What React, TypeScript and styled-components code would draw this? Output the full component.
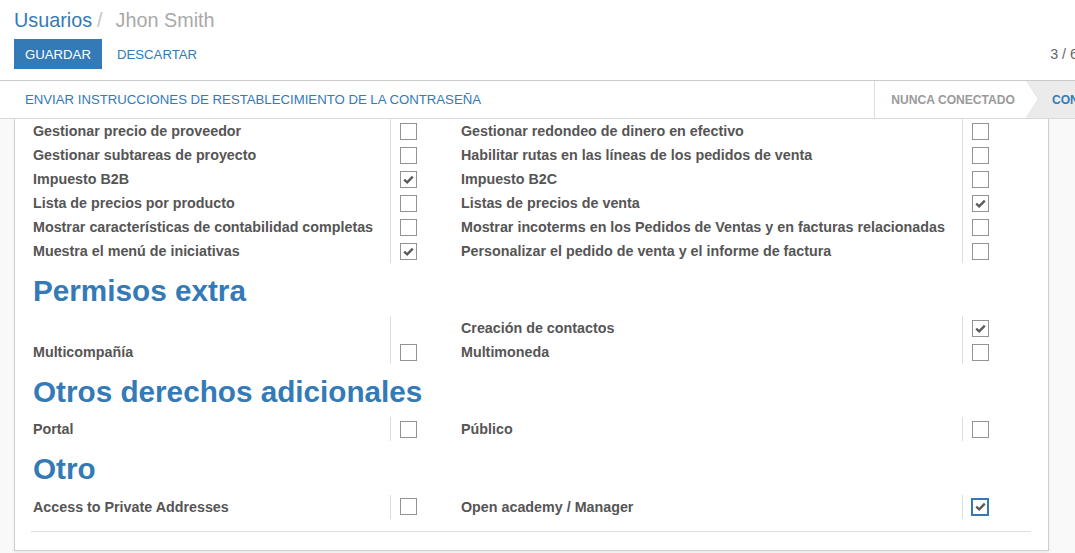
import React from "react";
import styled, { createGlobalStyle } from "styled-components";

const GlobalStyle = createGlobalStyle`
  html, body { margin: 0; padding: 0; overflow: hidden; background: #f9f9f9; }
  body { font-family: "Liberation Sans", Arial, sans-serif; }
  * { box-sizing: border-box; }
`;

const BLUE = "#337ab7";

const Page = styled.div`
  width: 1146px;
  height: 553px;
  display: flex;
  flex-direction: column;
  background: #f9f9f9;
`;

const ControlPanel = styled.div`
  height: 81px;
  background: #fff;
  border-bottom: 1px solid #cacaca;
  padding: 9px 0 0 14px;
  display: flex;
  flex-direction: column;
`;

const Breadcrumb = styled.div`
  font-size: 19.8px;
  line-height: 22px;
  height: 22px;
  white-space: nowrap;
  display: flex;
`;

const Crumb = styled.span`
  color: ${BLUE};
`;

const CrumbSep = styled.span`
  color: #c4c4c4;
  margin: 0 13px 0 5px;
`;

const CrumbActive = styled.span`
  color: #a9a9a9;
`;

const ButtonsRow = styled.div`
  margin-top: 8px;
  display: flex;
  align-items: center;
  height: 30px;
`;

const Button = styled.button<{ $primary?: boolean }>`
  height: 30px;
  padding: 0 11px;
  margin-right: 4px;
  border: none;
  border-radius: 0;
  font-family: "Liberation Sans", Arial, sans-serif;
  font-size: 13.2px;
  cursor: pointer;
  background: ${(p) => (p.$primary ? BLUE : "transparent")};
  color: ${(p) => (p.$primary ? "#fff" : BLUE)};
`;

const Pager = styled.div`
  margin-left: auto;
  display: flex;
  align-items: center;
  color: #666;
  font-size: 14.3px;
`;

const PagerValue = styled.span`
  margin-right: 8px;
`;

const PagerButton = styled.span`
  width: 30px;
  height: 30px;
  border: 1px solid #ccc;
  display: inline-flex;
  align-items: center;
  justify-content: center;
  color: #666;
`;

const StatusBar = styled.div`
  height: 38px;
  background: #fff;
  border-bottom: 1px solid #d9d9d9;
  display: flex;
  align-items: stretch;
  padding-left: 14px;
`;

const StatusAction = styled.div`
  display: flex;
  align-items: center;
  padding: 0 11px;
  color: ${BLUE};
  font-size: 13.2px;
  white-space: nowrap;
`;

const StatusSteps = styled.div`
  margin-left: auto;
  display: flex;
  align-items: stretch;
`;

const Step = styled.div<{ $active?: boolean }>`
  position: relative;
  display: flex;
  align-items: center;
  font-size: 12.1px;
  font-weight: bold;
  white-space: nowrap;
  color: ${(p) => (p.$active ? BLUE : "#9a9a9a")};
  background: ${(p) => (p.$active ? "#ebebeb" : "#fff")};
  padding: ${(p) => (p.$active ? "0 17px 0 26px" : "0 11px 0 16px")};
  border-left: ${(p) => (p.$active ? "none" : "1px solid #dcdcdc")};

  ${(p) =>
    !p.$active &&
    `
    &::before {
      content: "";
      position: absolute;
      top: 0;
      right: -13px;
      border-top: 18.5px solid transparent;
      border-bottom: 18.5px solid transparent;
      border-left: 13px solid #dcdcdc;
      z-index: 1;
    }
    &::after {
      content: "";
      position: absolute;
      top: 0;
      right: -12px;
      border-top: 18.5px solid transparent;
      border-bottom: 18.5px solid transparent;
      border-left: 12px solid #fff;
      z-index: 2;
    }
  `}
`;

const FormArea = styled.div`
  flex: 1;
  background: #f9f9f9;
  padding-left: 14px;
  overflow: hidden;
`;

const Sheet = styled.div`
  width: 1035px;
  background: #fff;
  border: 1px solid #cfcfcf;
  border-top: none;
  padding: 0 17px 18px 16px;
  box-shadow: 0 2px 3px rgba(0, 0, 0, 0.06);
`;

const Group = styled.div`
  margin-left: 2px;
  display: grid;
  grid-template-columns: 357px 71px 501px 69px;
  grid-auto-rows: 24px;
`;

const Label = styled.div`
  display: flex;
  align-items: center;
  font-size: 14.3px;
  font-weight: bold;
  color: #555;
  white-space: nowrap;
`;

const FieldCell = styled.div`
  border-left: 1px solid #dddddd;
  display: flex;
  align-items: center;
  padding-left: 8px;
`;

const Box = styled.span<{ $focused?: boolean }>`
  width: ${(p) => (p.$focused ? "18px" : "17px")};
  height: ${(p) => (p.$focused ? "18px" : "17px")};
  border: ${(p) => (p.$focused ? `2px solid ${BLUE}` : "1px solid #939393")};
  background: #fff;
  display: inline-flex;
  align-items: center;
  justify-content: center;
  margin-left: ${(p) => (p.$focused ? "0px" : "1px")};
`;

const Heading = styled.h2`
  margin: 13px 0 10.5px 2px;
  font-size: 29.7px;
  line-height: 29.7px;
  font-weight: bold;
  color: ${BLUE};
`;

const Rule = styled.hr`
  margin: 12.4px 0 0;
  border: none;
  border-top: 1px solid #dedede;
`;

const CheckMark = () => (
  <svg width="11" height="9" viewBox="0 0 11 9">
    <path d="M1.2 4.6 L4.2 7.4 L9.8 1.6" fill="none" stroke="#5a5a5a" strokeWidth="2.3" />
  </svg>
);

type Field = { label: string; checked?: boolean; focused?: boolean } | null;

const Checkbox = ({ checked, focused }: { checked?: boolean; focused?: boolean }) => (
  <Box $focused={focused}>{checked && <CheckMark />}</Box>
);

const Row = ({ left, right }: { left: Field; right: Field }) => (
  <>
    <Label>{left?.label}</Label>
    <FieldCell>{left && <Checkbox checked={left.checked} focused={left.focused} />}</FieldCell>
    <Label>{right?.label}</Label>
    <FieldCell>{right && <Checkbox checked={right.checked} focused={right.focused} />}</FieldCell>
  </>
);

const section1: [Field, Field][] = [
  [{ label: "Gestionar precio de proveedor" }, { label: "Gestionar redondeo de dinero en efectivo" }],
  [{ label: "Gestionar subtareas de proyecto" }, { label: "Habilitar rutas en las líneas de los pedidos de venta" }],
  [{ label: "Impuesto B2B", checked: true }, { label: "Impuesto B2C" }],
  [{ label: "Lista de precios por producto" }, { label: "Listas de precios de venta", checked: true }],
  [
    { label: "Mostrar características de contabilidad completas" },
    { label: "Mostrar incoterms en los Pedidos de Ventas y en facturas relacionadas" },
  ],
  [{ label: "Muestra el menú de iniciativas", checked: true }, { label: "Personalizar el pedido de venta y el informe de factura" }],
];

const extra: [Field, Field][] = [
  [null, { label: "Creación de contactos", checked: true }],
  [{ label: "Multicompañía" }, { label: "Multimoneda" }],
];

const otros: [Field, Field][] = [[{ label: "Portal" }, { label: "Público" }]];

const otro: [Field, Field][] = [
  [{ label: "Access to Private Addresses" }, { label: "Open academy / Manager", checked: true, focused: true }],
];

const GroupBlock = ({ rows }: { rows: [Field, Field][] }) => (
  <Group>
    {rows.map(([l, r], i) => (
      <Row key={i} left={l} right={r} />
    ))}
  </Group>
);

export default function App() {
  return (
    <>
      <GlobalStyle />
      <Page>
        <ControlPanel>
          <Breadcrumb>
            <Crumb>Usuarios</Crumb>
            <CrumbSep>/</CrumbSep>
            <CrumbActive>Jhon Smith</CrumbActive>
          </Breadcrumb>
          <ButtonsRow>
            <Button $primary>GUARDAR</Button>
            <Button>DESCARTAR</Button>
            <Pager>
              <PagerValue>3 / 6</PagerValue>
              <PagerButton>‹</PagerButton>
              <PagerButton>›</PagerButton>
            </Pager>
          </ButtonsRow>
        </ControlPanel>
        <StatusBar>
          <StatusAction>ENVIAR INSTRUCCIONES DE RESTABLECIMIENTO DE LA CONTRASEÑA</StatusAction>
          <StatusSteps>
            <Step>NUNCA CONECTADO</Step>
            <Step $active>CONECTADO</Step>
          </StatusSteps>
        </StatusBar>
        <FormArea>
          <Sheet>
            <GroupBlock rows={section1} />
            <Heading>Permisos extra</Heading>
            <GroupBlock rows={extra} />
            <Heading>Otros derechos adicionales</Heading>
            <GroupBlock rows={otros} />
            <Heading>Otro</Heading>
            <GroupBlock rows={otro} />
            <Rule />
          </Sheet>
        </FormArea>
      </Page>
    </>
  );
}
